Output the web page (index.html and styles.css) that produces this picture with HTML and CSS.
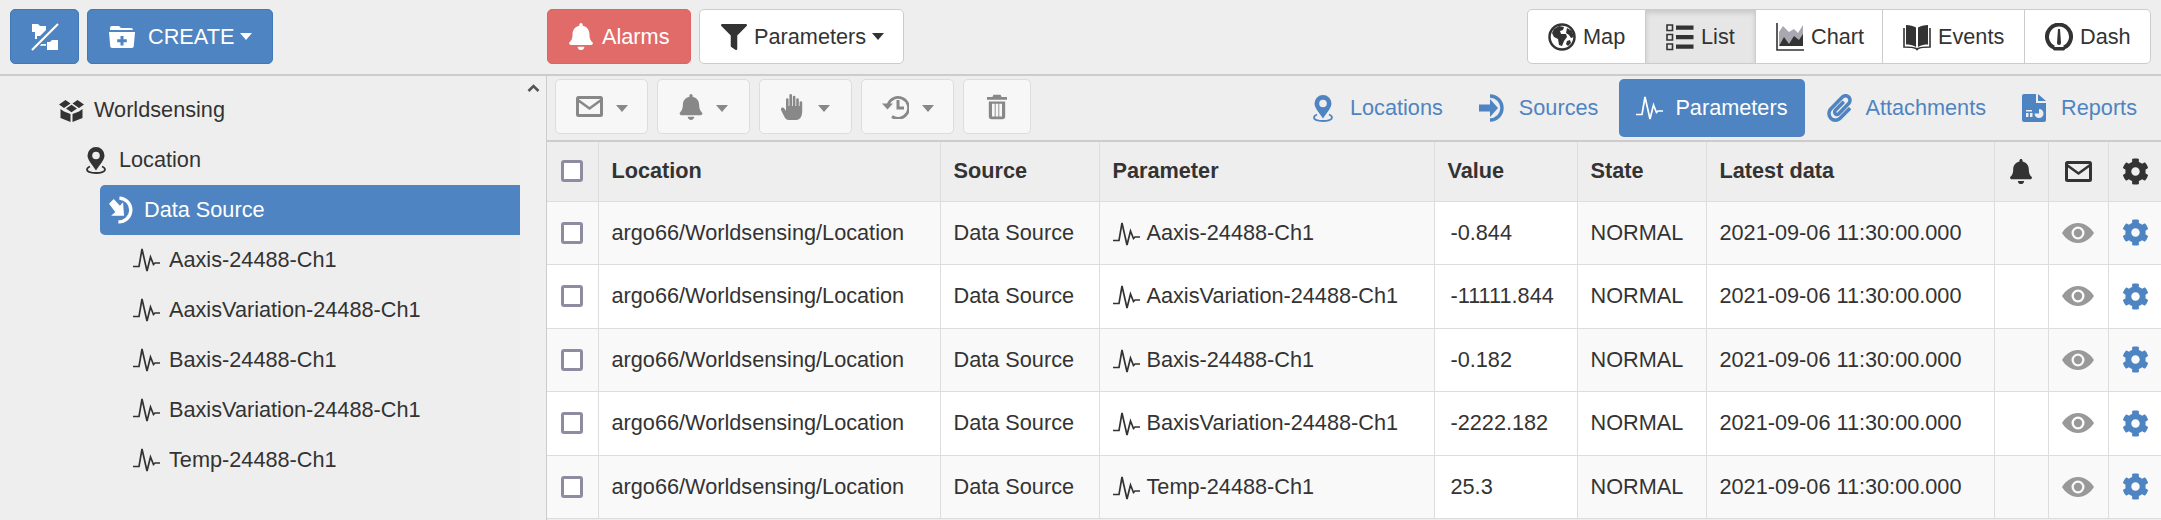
FILE: index.html
```html
<!DOCTYPE html>
<html lang="en">
<head>
  <meta charset="UTF-8">
  <title>Parameters list</title>
  <meta name="viewport" content="width=device-width, initial-scale=1.0">
  <link rel="stylesheet" href="styles.css">
</head>
<body>

  <!-- Shared icons -->
  <svg class="icon-defs">
    <symbol id="i-pulse" viewBox="0 0 27 24"><path fill="none" stroke="currentColor" stroke-width="1.7" d="M0 18.5h6L9 1l5 22 3.5-14 3 7.5 1.5-1.5h5"/></symbol>
    <symbol id="i-bell" viewBox="0 0 448 512"><path fill="currentColor" d="M224 512c35.32 0 63.97-28.65 63.97-64H160.03c0 35.35 28.65 64 63.97 64zm215.39-149.71c-19.32-20.76-55.47-51.99-55.47-154.29 0-77.7-54.48-139.9-127.94-155.16V32c0-17.67-14.32-32-31.98-32s-31.98 14.33-31.98 32v20.84C118.56 68.1 64.08 130.3 64.08 208c0 102.3-36.15 133.53-55.47 154.29-6 6.45-8.66 14.16-8.61 21.71.11 16.4 12.98 32 32.1 32h383.8c19.12 0 32-15.6 32.1-32 .05-7.55-2.61-15.27-8.61-21.71z"/></symbol>
    <symbol id="i-cog" viewBox="0 0 512 512"><path fill="currentColor" d="M487.4 315.7l-42.6-24.6c4.3-23.2 4.3-47 0-70.2l42.6-24.6c4.9-2.8 7.1-8.6 5.5-14-11.1-35.6-30-67.8-54.7-94.6-3.8-4.1-10-5.1-14.8-2.3L380.8 110c-17.9-15.4-38.5-27.3-60.8-35.1V25.8c0-5.6-3.9-10.5-9.4-11.7-36.7-8.2-74.3-7.8-109.2 0-5.5 1.2-9.4 6.1-9.4 11.7V75c-22.2 7.9-42.8 19.8-60.8 35.1L88.7 85.5c-4.9-2.8-11-1.9-14.8 2.3-24.7 26.7-43.6 58.9-54.7 94.6-1.7 5.4.6 11.2 5.5 14L67.3 221c-4.3 23.2-4.3 47 0 70.2l-42.6 24.6c-4.9 2.8-7.1 8.6-5.5 14 11.1 35.6 30 67.8 54.7 94.6 3.8 4.1 10 5.1 14.8 2.3l42.6-24.6c17.9 15.4 38.5 27.3 60.8 35.1v49.2c0 5.6 3.9 10.5 9.4 11.7 36.7 8.2 74.3 7.8 109.2 0 5.5-1.2 9.4-6.1 9.4-11.7v-49.2c22.2-7.9 42.8-19.8 60.8-35.1l42.6 24.6c4.9 2.8 11 1.9 14.8-2.3 24.7-26.7 43.6-58.9 54.7-94.6 1.5-5.5-.7-11.3-5.6-14.1zM256 336c-44.1 0-80-35.9-80-80s35.9-80 80-80 80 35.9 80 80-35.9 80-80 80z"/></symbol>
    <symbol id="i-eye" viewBox="0 0 32 20"><path fill="currentColor" fill-rule="evenodd" d="M16 0c7 0 12.500 4.500 16 10-3.500 5.500-9 10-16 10S3.500 15.500 0 10C3.500 4.500 9 0 16 0zm0 3.500a6.500 6.500 0 1 0 0 13 6.500 6.500 0 0 0 0-13z"/><circle cx="16" cy="10" r="4.200" fill="currentColor"/></symbol>
    <symbol id="i-mail" viewBox="0 0 27 21"><rect x="1.500" y="1.500" width="24" height="18" rx="1" fill="none" stroke="currentColor" stroke-width="3"/><path fill="none" stroke="currentColor" stroke-width="2.600" d="M2.500 4.500l11 8 11-8"/></symbol>
    <symbol id="i-marker" viewBox="0 0 20 27"><path fill="currentColor" fill-rule="evenodd" d="M10 0a8.500 8.500 0 0 1 8.500 8.500c0 4.500-5 9.500-8.500 15-3.500-5.500-8.500-10.500-8.500-15A8.500 8.500 0 0 1 10 0zm0 4.700a3.800 3.800 0 1 0 0 7.600 3.800 3.800 0 0 0 0-7.600z"/><path fill="none" stroke="currentColor" stroke-width="1.800" d="M4 19.500c-2 .8-3 2.200-3 3.300 0 1.900 4 3.200 9 3.200s9-1.300 9-3.200c0-1.100-1-2.500-3-3.300"/></symbol>
  </svg>

  <header class="topbar">
    <div class="topbar-left">
      <button class="btn btn-blue btn-square">
        <svg class="ico-tree" viewBox="0 0 28 28"><path fill="currentColor" d="M1 1h6l2 2h6v4L9 13H6v3H4V9H1z"/><path fill="currentColor" d="M16 19h3l2-2h6v10H16zM9 21h6v1.800H9z"/><path stroke="#4e84c1" stroke-width="5" d="M1 27L27 1"/><path stroke="currentColor" stroke-width="2.200" d="M1 27L27 1"/></svg>
      </button>
      <button class="btn btn-blue btn-create">
        <svg class="ico-folder" viewBox="0 0 26 22"><path fill="currentColor" d="M3 0h7l2 2h10a2 2 0 0 1 2 2H1V2a2 2 0 0 1 2-2z"/><path fill="currentColor" fill-rule="evenodd" d="M0 6h26l-1.200 14a2 2 0 0 1-2 2H3.200a2 2 0 0 1-2-2zM11.500 10v3.300H8.200v3h3.300v3.200h3v-3.200h3.300v-3h-3.300V10z"/></svg>
        CREATE <span class="caret"></span>
      </button>
    </div>
    <div class="topbar-mid">
      <button class="btn btn-red">
        <svg class="ico-bell-lg"><use href="#i-bell"/></svg>
        Alarms
      </button>
      <button class="btn btn-white btn-filter">
        <svg class="ico-filter" viewBox="0 0 512 512"><path fill="currentColor" d="M487.976 0H24.028C2.71 0-8.047 25.866 7.058 40.971L192 225.941V432c0 7.831 3.821 15.17 10.237 19.662l80 55.98C298.02 518.69 320 507.493 320 487.98V225.941l184.947-184.97C520.021 25.896 509.338 0 487.976 0z"/></svg>
        Parameters <span class="caret caret-dark"></span>
      </button>
    </div>
    <nav class="view-group">
      <a class="view-btn view-map">
        <svg class="ico-view" viewBox="0 0 28 28"><circle cx="14" cy="14" r="12.500" fill="#fff" stroke="currentColor" stroke-width="2.500"/><path fill="currentColor" d="M6 6l5-3 5 1-1 3-3 1 1 3 5 0 1 3-3 4-2 5-3-1-1-6-4-2-2-4zM19 5l5 3 2 6-3 1-2-3-3-2z M19 18l3-1 1 3-3 3-2-2z"/></svg>
        Map
      </a>
      <a class="view-btn view-list is-active">
        <svg class="ico-view" viewBox="0 0 28 28"><path fill="none" stroke="currentColor" stroke-width="1.600" d="M1 2h5.500v5.500H1zM1 11.500h5.500V17H1zM1 21h5.500v5.500H1z"/><path fill="currentColor" d="M10 2.500h17.500v4.300H10zM10 12h17.500v4.300H10zM10 21.500h17.500v4.300H10z"/></svg>
        List
      </a>
      <a class="view-btn view-chart">
        <svg class="ico-view" viewBox="0 0 28 28"><path fill="#a9a7b0" d="M3 9l4-6 6 6 5-3 4 4 5-8v20H3z"/><path fill="currentColor" d="M3 23l5-9 5 7 5-8 5 4 4-6v12H3z"/><path fill="none" stroke="currentColor" stroke-width="1.600" d="M1 0v27h27"/></svg>
        Chart
      </a>
      <a class="view-btn view-events">
        <svg class="ico-view" viewBox="0 0 28 26"><path fill="currentColor" d="M13 3.500v19.500C10 21 6 20.500 3 20.500V1c4 0 7.500 1 10 2.500zM15 3.500V23c3-2 7-2.500 10-2.500V1c-4 0-7.500 1-10 2.500z"/><path fill="none" stroke="currentColor" stroke-width="1.600" d="M1 4v19c4 0 9 0 12 1.500l1 1 1-1C18 23 24 23 27 23V4"/></svg>
        Events
      </a>
      <a class="view-btn view-dash">
        <svg class="ico-view" viewBox="0 0 28 28"><path fill="none" stroke="currentColor" stroke-width="4" d="M9 24.500a12 12 0 1 1 10 0"/><path fill="currentColor" d="M13 6h2l1 14a2 2 0 0 1-4 0zM8 24h12v2.500a2 2 0 0 1-2 1H10a2 2 0 0 1-2-1z"/></svg>
        Dash
      </a>
    </nav>
  </header>

  <div class="main">
    <aside class="sidebar">
      <ul class="tree">
        <li class="tree-row level-0">
          <svg class="ico-cube" viewBox="0 0 25 24"><path fill="currentColor" d="M0 6.500L6.500 2l5 3.500-6.500 4.500zM25 6.500L18.500 2l-5 3.500 6.500 4.500zM7 10.500l5.500-3.700 5.500 3.700-5.500 3.700zM1.500 11l3.500 2.400 6.500 2.600v8l-10-4zM23.500 11L20 13.400 13.500 16v8l10-4z"/></svg>
          Worldsensing
        </li>
        <li class="tree-row level-1">
          <svg class="ico-marker"><use href="#i-marker"/></svg>
          Location
        </li>
        <li class="tree-row level-2 is-selected">
          <svg class="ico-source" viewBox="0 0 27 27"><path fill="none" stroke="currentColor" stroke-width="3.200" d="M11 2a11.500 11.500 0 1 1-1 23"/><path fill="currentColor" d="M1 7.500L5.500 3l6 6.500 3-3.500 1 13H3l4-3.500z"/></svg>
          Data Source
        </li>
        <li class="tree-row level-3"><svg class="ico-pulse"><use href="#i-pulse"/></svg>Aaxis-24488-Ch1</li>
        <li class="tree-row level-3"><svg class="ico-pulse"><use href="#i-pulse"/></svg>AaxisVariation-24488-Ch1</li>
        <li class="tree-row level-3"><svg class="ico-pulse"><use href="#i-pulse"/></svg>Baxis-24488-Ch1</li>
        <li class="tree-row level-3"><svg class="ico-pulse"><use href="#i-pulse"/></svg>BaxisVariation-24488-Ch1</li>
        <li class="tree-row level-3"><svg class="ico-pulse"><use href="#i-pulse"/></svg>Temp-24488-Ch1</li>
      </ul>
      <div class="scroll-track">
        <svg class="ico-chevron" viewBox="0 0 12 8"><path fill="none" stroke="currentColor" stroke-width="2.600" d="M1 7l5-5 5 5"/></svg>
      </div>
    </aside>

    <section class="content">
      <div class="subbar">
        <div class="actions">
          <button class="act-btn">
            <svg class="ico-mail"><use href="#i-mail"/></svg><span class="caret caret-grey"></span>
          </button>
          <button class="act-btn">
            <svg class="ico-act-bell"><use href="#i-bell"/></svg><span class="caret caret-grey"></span>
          </button>
          <button class="act-btn">
            <svg class="ico-hand" viewBox="0 0 24 27"><path fill="currentColor" d="M3 15l2 3V6.500a1.300 1.300 0 0 1 2.600 0V13h.8V2.300a1.300 1.300 0 0 1 2.600 0V13h.8V4a1.300 1.300 0 0 1 2.600 0v9h.8V6.500a1.300 1.300 0 0 1 2.600 0V13h.8V9.500a1.300 1.300 0 0 1 2.600 0V18c0 5-2 9-6 9H8c-3 0-4-2-5-4l-3-6c-.8-2 1.600-3.500 3-2z"/></svg><span class="caret caret-grey"></span>
          </button>
          <button class="act-btn">
            <svg class="ico-history" viewBox="0 0 27 25"><path fill="none" stroke="currentColor" stroke-width="2.800" d="M6 11A10.500 10.500 0 1 1 10 22.500"/><path fill="currentColor" d="M0 9.500h11l-5.500 6zM14.500 6h3v6.500H22v3h-7.500z"/></svg><span class="caret caret-grey"></span>
          </button>
          <button class="act-btn act-trash">
            <svg class="ico-trash" viewBox="0 0 22 27"><path fill="currentColor" fill-rule="evenodd" d="M7 0h8l1 2.500h6v3H0v-3h6zM2 7.500h18V24a3 3 0 0 1-3 3H5a3 3 0 0 1-3-3zM5.500 10v14h3V10zM9.500 10v14h3V10zM13.500 10v14h3V10z"/></svg>
          </button>
        </div>
        <nav class="tabs">
          <a class="tab tab-locations"><svg class="ico-marker"><use href="#i-marker"/></svg>Locations</a>
          <a class="tab tab-sources">
            <svg class="ico-tab" viewBox="0 0 27 28"><path fill="none" stroke="currentColor" stroke-width="3.400" d="M11 2a12 12 0 1 1 0 24"/><path fill="currentColor" d="M0 10.500h11V5l8 9-8 9v-5.500H0z"/></svg>
            Sources
          </a>
          <a class="tab tab-params is-active"><svg class="ico-pulse"><use href="#i-pulse"/></svg>Parameters</a>
          <a class="tab tab-attach">
            <svg class="ico-tab" viewBox="0 0 448 512"><path fill="currentColor" d="M43.246 466.142c-58.43-60.289-57.341-157.511 1.386-217.581L254.392 34c44.316-45.332 116.351-45.336 160.671 0 43.89 44.894 43.943 117.329 0 162.276L232.214 383.128c-29.855 30.537-78.633 30.111-107.982-.998-28.275-29.97-27.368-77.473 1.452-106.953l143.743-146.835c6.182-6.314 16.312-6.422 22.626-.241l22.861 22.379c6.315 6.182 6.422 16.312.241 22.626L171.427 319.927c-4.932 5.045-5.236 13.428-.648 18.292 4.372 4.634 11.245 4.711 15.688.165l182.849-186.851c19.613-20.062 19.613-52.725-.011-72.798-19.189-19.627-49.957-19.637-69.154 0L90.39 293.295c-34.763 35.56-35.299 93.12-1.191 128.313 34.01 35.093 88.985 35.137 123.058.286l172.06-175.999c6.177-6.319 16.307-6.433 22.626-.256l22.877 22.364c6.319 6.177 6.434 16.307.256 22.626l-172.06 175.998c-59.576 60.938-155.943 60.216-214.77-.485z"/></svg>
            Attachments
          </a>
          <a class="tab tab-reports">
            <svg class="ico-report" viewBox="0 0 24 28"><path fill="currentColor" d="M2 0h12v9h10v17a2 2 0 0 1-2 2H2a2 2 0 0 1-2-2V2a2 2 0 0 1 2-2zM16 0l8 7h-8z"/><path fill="#eee" d="M4 19h2.500v4H4zM4 16h6v1.500H4zM8 19h2.500v4H8zM17 15a4.500 4.500 0 1 1-4.500 4.500H17z"/></svg>
            Reports
          </a>
        </nav>
      </div>

      <table class="grid">
        <colgroup>
          <col class="col-check"><col class="col-location"><col class="col-source"><col class="col-param">
          <col class="col-value"><col class="col-state"><col class="col-date"><col class="col-alarm"><col class="col-mail"><col class="col-gear">
        </colgroup>
        <thead>
          <tr>
            <th class="cell-center"><input type="checkbox" class="check"></th>
            <th>Location</th>
            <th>Source</th>
            <th>Parameter</th>
            <th>Value</th>
            <th>State</th>
            <th>Latest data</th>
            <th class="cell-center"><svg class="ico-th-bell"><use href="#i-bell"/></svg></th>
            <th class="cell-center"><svg class="ico-th-mail"><use href="#i-mail"/></svg></th>
            <th class="cell-center"><svg class="ico-gear"><use href="#i-cog"/></svg></th>
          </tr>
        </thead>
        <tbody>
          <tr>
            <td class="cell-center"><input type="checkbox" class="check"></td>
            <td>argo66/Worldsensing/Location</td>
            <td>Data Source</td>
            <td><svg class="ico-pulse"><use href="#i-pulse"/></svg>Aaxis-24488-Ch1</td>
            <td class="cell-value">-0.844</td>
            <td>NORMAL</td>
            <td>2021-09-06 11:30:00.000</td>
            <td></td>
            <td class="cell-center"><svg class="ico-eye"><use href="#i-eye"/></svg></td>
            <td class="cell-center"><svg class="ico-gear ico-gear-blue"><use href="#i-cog"/></svg></td>
          </tr>
          <tr>
            <td class="cell-center"><input type="checkbox" class="check"></td>
            <td>argo66/Worldsensing/Location</td>
            <td>Data Source</td>
            <td><svg class="ico-pulse"><use href="#i-pulse"/></svg>AaxisVariation-24488-Ch1</td>
            <td class="cell-value">-11111.844</td>
            <td>NORMAL</td>
            <td>2021-09-06 11:30:00.000</td>
            <td></td>
            <td class="cell-center"><svg class="ico-eye"><use href="#i-eye"/></svg></td>
            <td class="cell-center"><svg class="ico-gear ico-gear-blue"><use href="#i-cog"/></svg></td>
          </tr>
          <tr>
            <td class="cell-center"><input type="checkbox" class="check"></td>
            <td>argo66/Worldsensing/Location</td>
            <td>Data Source</td>
            <td><svg class="ico-pulse"><use href="#i-pulse"/></svg>Baxis-24488-Ch1</td>
            <td class="cell-value">-0.182</td>
            <td>NORMAL</td>
            <td>2021-09-06 11:30:00.000</td>
            <td></td>
            <td class="cell-center"><svg class="ico-eye"><use href="#i-eye"/></svg></td>
            <td class="cell-center"><svg class="ico-gear ico-gear-blue"><use href="#i-cog"/></svg></td>
          </tr>
          <tr>
            <td class="cell-center"><input type="checkbox" class="check"></td>
            <td>argo66/Worldsensing/Location</td>
            <td>Data Source</td>
            <td><svg class="ico-pulse"><use href="#i-pulse"/></svg>BaxisVariation-24488-Ch1</td>
            <td class="cell-value">-2222.182</td>
            <td>NORMAL</td>
            <td>2021-09-06 11:30:00.000</td>
            <td></td>
            <td class="cell-center"><svg class="ico-eye"><use href="#i-eye"/></svg></td>
            <td class="cell-center"><svg class="ico-gear ico-gear-blue"><use href="#i-cog"/></svg></td>
          </tr>
          <tr>
            <td class="cell-center"><input type="checkbox" class="check"></td>
            <td>argo66/Worldsensing/Location</td>
            <td>Data Source</td>
            <td><svg class="ico-pulse"><use href="#i-pulse"/></svg>Temp-24488-Ch1</td>
            <td class="cell-value">25.3</td>
            <td>NORMAL</td>
            <td>2021-09-06 11:30:00.000</td>
            <td></td>
            <td class="cell-center"><svg class="ico-eye"><use href="#i-eye"/></svg></td>
            <td class="cell-center"><svg class="ico-gear ico-gear-blue"><use href="#i-cog"/></svg></td>
          </tr>
        </tbody>
      </table>
    </section>
  </div>

</body>
</html>
```
FILE: styles.css
```css
* {
  box-sizing: border-box;
}

html, body {
  margin: 0;
  height: 100%;
  overflow: hidden;
}

body {
  font-family: 'Liberation Sans', Arial, sans-serif;
  font-size: 21.7px;
  color: #333;
  background: #eee;
}

.icon-defs {
  display: none;
}

svg {
  flex: none;
  display: block;
}

/* Top bar */
.topbar {
  display: flex;
  align-items: center;
  height: 76px;
  padding: 10px 10px 11px 10px;
  border-bottom: 2px solid #ccc;
}

.topbar-left {
  display: flex;
  gap: 8px;
  width: 537px;
}

.topbar-mid {
  display: flex;
  gap: 8px;
}

.btn {
  display: flex;
  align-items: center;
  height: 55px;
  border-radius: 5px;
  border: 1px solid transparent;
  font: inherit;
  padding: 0;
}

.btn-blue {
  background: #4e84c1;
  border-color: #4079b8;
  color: #fff;
}

.btn-square {
  width: 69px;
  justify-content: center;
}

.btn-create {
  width: 186px;
  padding-left: 21px;
}

.btn-red {
  width: 144px;
  padding-left: 21px;
  background: #e06b68;
  border-color: #dd6460;
  color: #fff;
}

.btn-white {
  background: #fff;
  border-color: #ccc;
  color: #333;
}

.btn-filter {
  width: 205px;
  padding-left: 21px;
}

.ico-tree {
  width: 28px;
  height: 28px;
}

.ico-folder {
  width: 26px;
  height: 22px;
  margin-right: 13px;
}

.ico-bell-lg {
  width: 24px;
  height: 27px;
  margin-right: 9px;
}

.ico-filter {
  width: 26px;
  height: 26px;
  margin-right: 7px;
}

.caret {
  display: inline-block;
  width: 0;
  height: 0;
  margin-left: 6px;
  border-top: 7px solid #fff;
  border-left: 6px solid transparent;
  border-right: 6px solid transparent;
}

.caret-dark {
  border-top-color: #333;
}

.caret-grey {
  border-top-color: #888;
}

/* Map / List / Chart switch */
.view-group {
  display: flex;
  height: 55px;
  margin-left: auto;
  background: #fff;
  border: 1px solid #ccc;
  border-radius: 5px;
}

.view-btn {
  display: flex;
  align-items: center;
  gap: 7px;
  padding-left: 20px;
  border-left: 1px solid #ccc;
}

.view-map {
  width: 117px;
  border-left: 0;
}

.view-list {
  width: 110px;
}

.view-list.is-active {
  background: #e6e6e6;
  box-shadow: inset 0 3px 5px rgba(0, 0, 0, 0.125);
}

.view-chart {
  width: 127px;
}

.view-events {
  width: 142px;
}

.view-dash {
  width: 126px;
}

.ico-view {
  width: 28px;
  height: 28px;
}

/* Layout below the bar */
.main {
  display: flex;
  height: 444px;
}

.sidebar {
  display: flex;
  width: 546px;
  flex: none;
}

.tree {
  flex: 1;
  list-style: none;
  margin: 0;
  padding: 9px 0 0;
}

.tree-row {
  display: flex;
  align-items: center;
  height: 50px;
}

.level-0 {
  padding-left: 59px;
}

.level-1 {
  padding-left: 86px;
}

.level-2 {
  margin-left: 100px;
  padding-left: 8px;
}

.level-3 {
  padding-left: 133px;
}

.tree-row.is-selected {
  background: #4e84c1;
  color: #fff;
  border-radius: 5px 0 0 5px;
}

.ico-cube {
  width: 25px;
  height: 24px;
  margin-right: 10px;
}

.ico-marker {
  width: 20px;
  height: 27px;
  margin-right: 13px;
}

.ico-source {
  width: 28px;
  height: 28px;
  margin-right: 8px;
}

.ico-pulse {
  width: 27px;
  height: 24px;
  margin-right: 9px;
}

.scroll-track {
  width: 26px;
  padding: 8px 0 0 7px;
  background: #f0f0f0;
  color: #555;
}

.ico-chevron {
  width: 13px;
  height: 8px;
}

/* Content column */
.content {
  flex: 1;
  min-width: 0;
  border-left: 1px solid #ccc;
}

.subbar {
  display: flex;
  height: 64px;
  padding: 3px 0 0 8px;
}

.actions {
  display: flex;
  gap: 9px;
}

.act-btn {
  display: flex;
  align-items: center;
  justify-content: center;
  gap: 13px;
  width: 93px;
  height: 55px;
  padding: 0;
  background: #f7f7f7;
  border: 1px solid #ddd;
  border-radius: 5px;
  color: #888;
}

.act-btn .caret {
  margin: 4px 0 0;
}

.act-trash {
  width: 68px;
}

.ico-mail {
  width: 27px;
  height: 21px;
}

.ico-act-bell {
  width: 24px;
  height: 26px;
}

.ico-hand {
  width: 24px;
  height: 27px;
}

.ico-history {
  width: 27px;
  height: 25px;
}

.ico-trash {
  width: 20px;
  height: 26px;
}

.tabs {
  display: flex;
  margin-left: auto;
  padding-right: 6px;
  height: 58px;
}

.tab {
  display: flex;
  align-items: center;
  color: #4e84c1;
  padding: 0 18px;
  border-radius: 5px;
}

.tab.is-active {
  background: #4e84c1;
  color: #fff;
}

.tab-locations .ico-marker {
  margin-right: 17px;
}

.tab-sources {
  padding-right: 21px;
}

.tab-params {
  padding: 0 17px;
}

.tab-params .ico-pulse {
  margin-right: 12px;
}

.tab-attach {
  padding-left: 21px;
}

.ico-tab {
  width: 27px;
  height: 28px;
  margin-right: 13px;
}

.ico-report {
  width: 24px;
  height: 28px;
  margin-right: 15px;
}

/* Table */
.grid {
  width: 1615px;
  table-layout: fixed;
  border-collapse: collapse;
  border-top: 2px solid #ccc;
}

.col-check { width: 51px; }
.col-location { width: 342px; }
.col-source { width: 159px; }
.col-param { width: 335px; }
.col-value { width: 143px; }
.col-state { width: 129px; }
.col-date { width: 288px; }
.col-alarm { width: 54px; }
.col-mail { width: 60px; }
.col-gear { width: 54px; }

.grid th,
.grid td {
  padding: 0 13px;
  border: 1px solid #ddd;
  text-align: left;
  white-space: nowrap;
}

.grid tr > :first-child {
  border-left: 0;
}

.grid tr > :last-child {
  border-right: 0;
}

.grid th {
  height: 60px;
  background: #eee;
  font-weight: bold;
}

.grid td {
  height: 63.5px;
  background: #fff;
}

.grid tbody tr:nth-child(odd) td {
  background: #f9f9f9;
}

.grid tbody tr td.cell-value {
  padding-left: 16px;
  background: #fff;
}

.grid td .ico-pulse {
  display: inline-block;
  vertical-align: middle;
  margin-right: 7px;
}

.grid .cell-center {
  padding: 0;
}

.grid .cell-center svg,
.grid .cell-center .check {
  display: block;
  margin: 0 auto;
}

.check {
  appearance: none;
  width: 22px;
  height: 22px;
  background: #fff;
  border: 3px solid #8e8ca0;
  border-radius: 3px;
}

.ico-th-bell {
  width: 24px;
  height: 25px;
}

.ico-th-mail {
  width: 27px;
  height: 21px;
}

.ico-gear {
  width: 27px;
  height: 27px;
}

.ico-gear-blue {
  color: #4e84c1;
}

.ico-eye {
  width: 32px;
  height: 20px;
  color: #999;
}
```
